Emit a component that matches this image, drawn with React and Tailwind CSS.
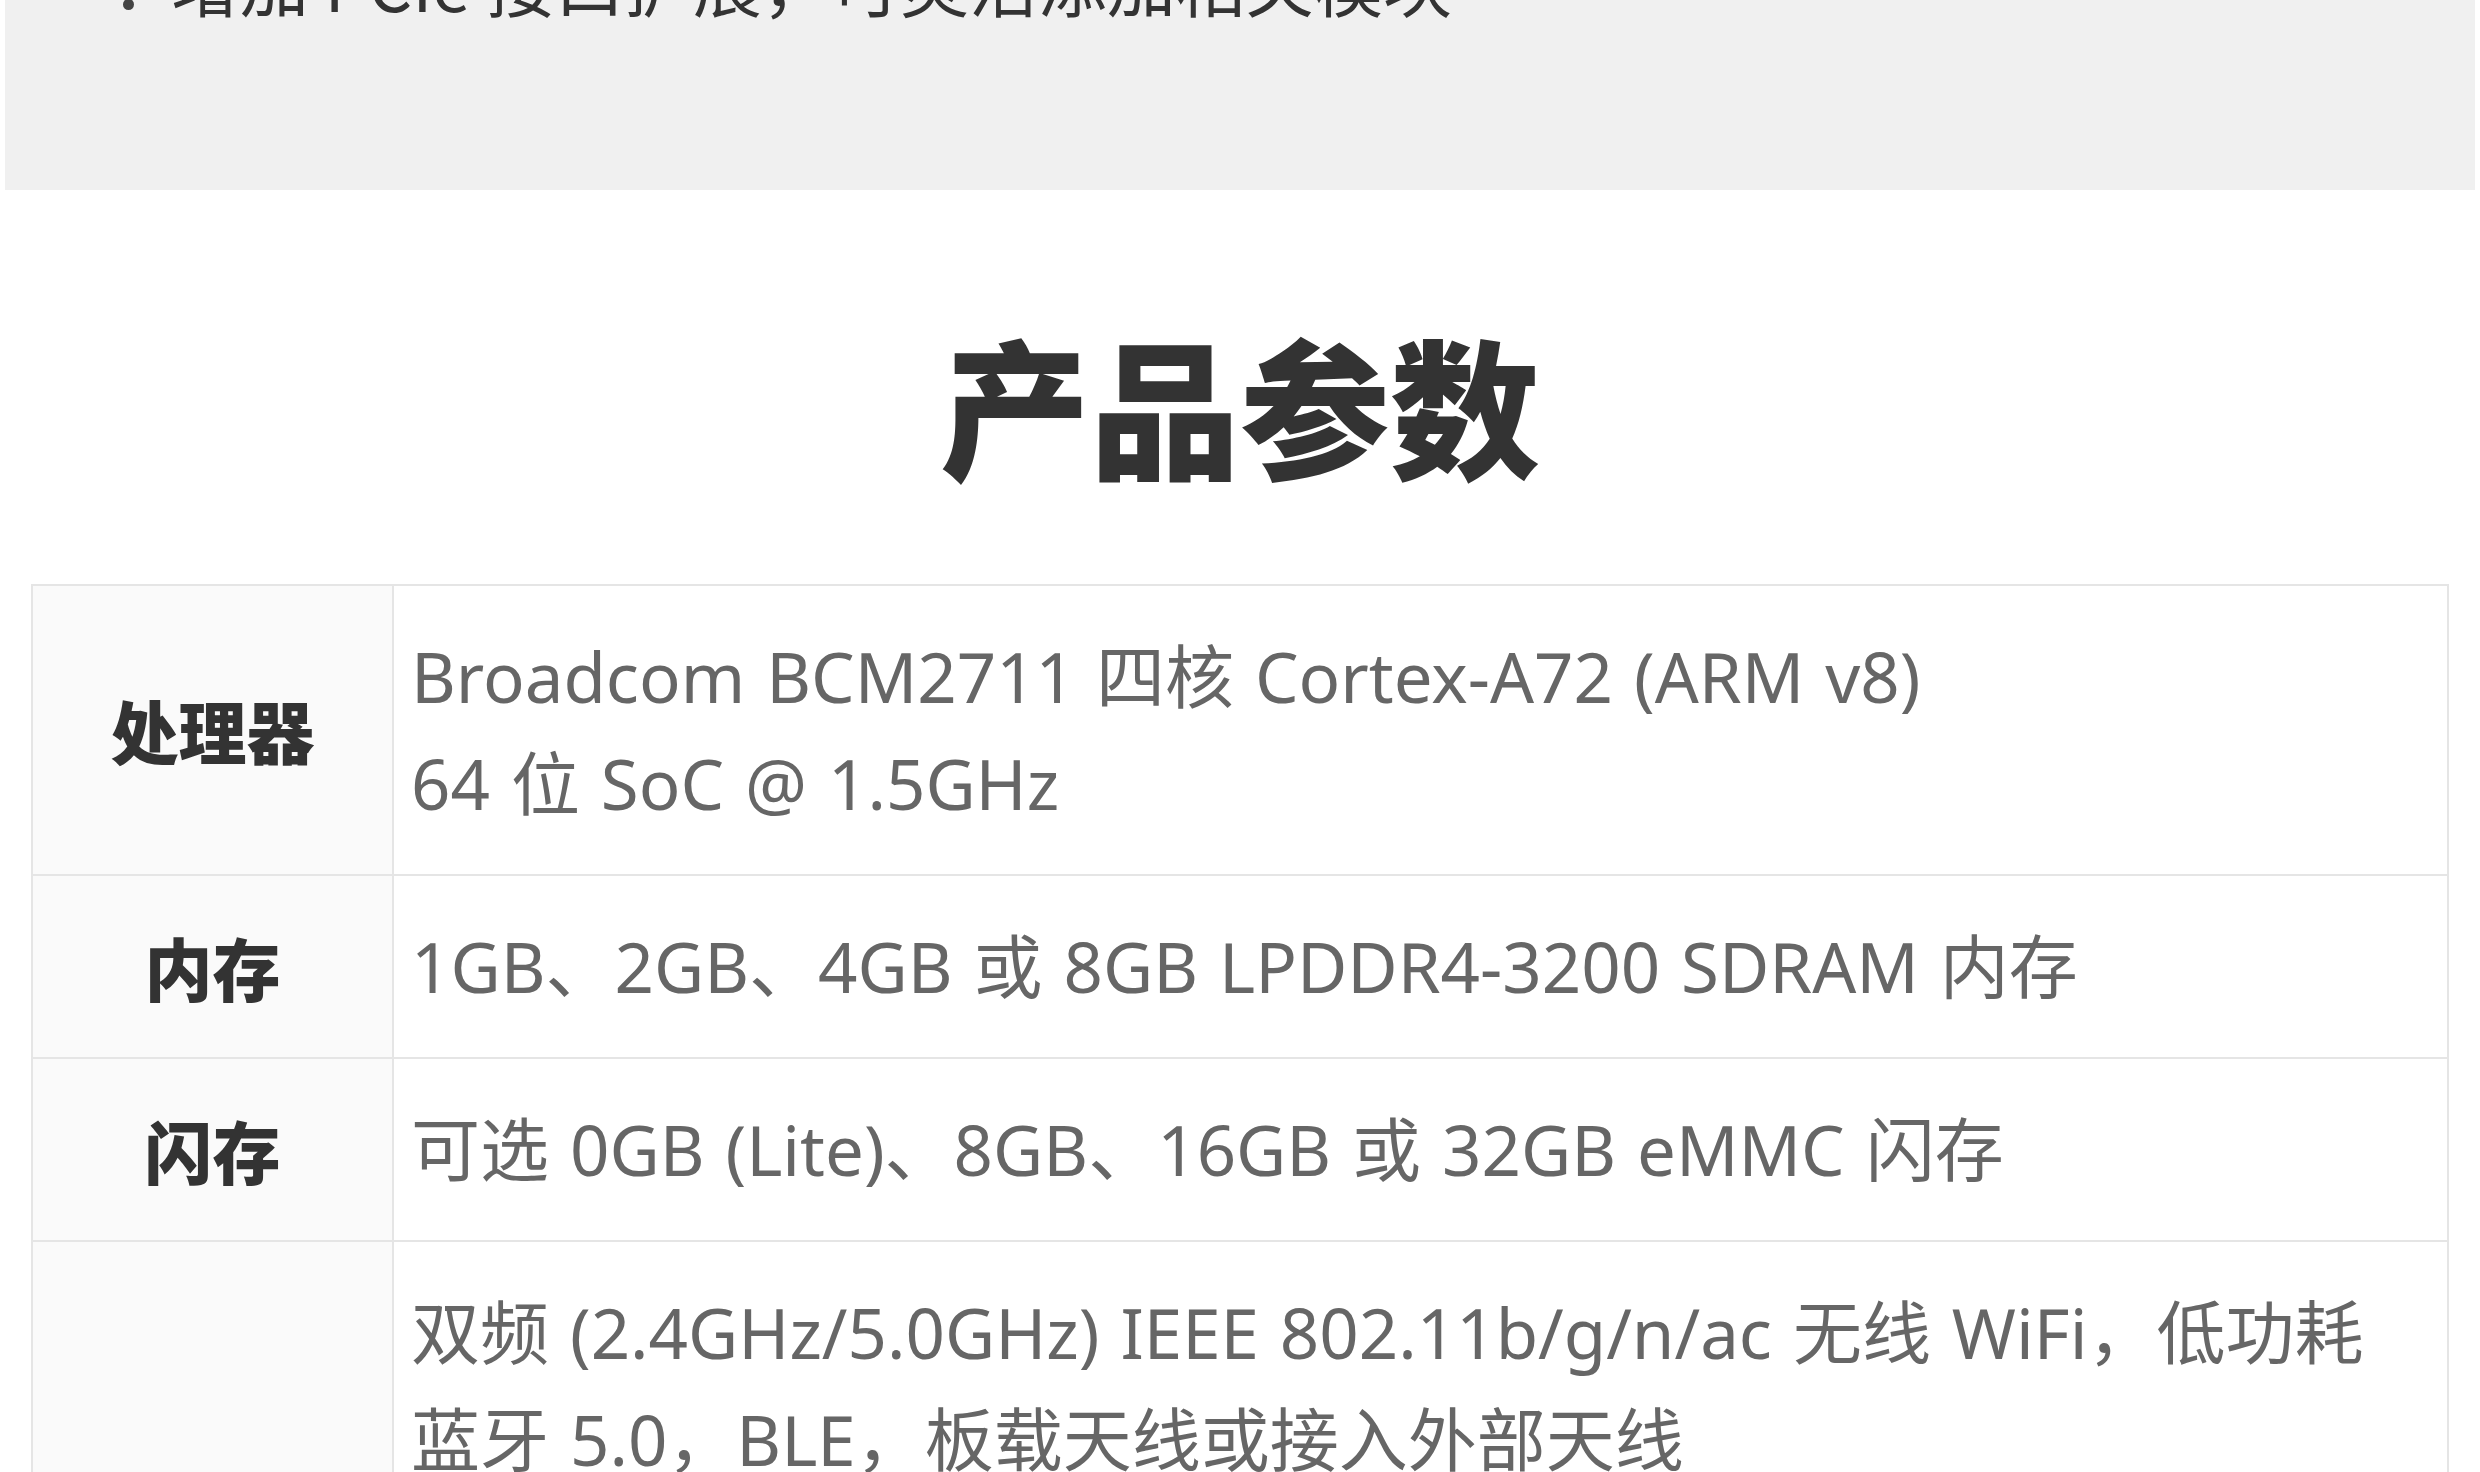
import React from "react";

const FONT = { fontFamily: '"Noto Sans", "Noto Sans CJK SC", sans-serif' };
const CJK = { fontFamily: '"Noto Sans CJK SC", sans-serif' };

function Row({ label, lines, first }) {
  return (
    <div className={`flex ${first ? "" : "border-t-2 border-[#e5e5e5]"}`}>
      <div
        className="w-[361px] shrink-0 bg-[#fafafa] border-r-2 border-[#e5e5e5] flex items-center justify-center text-[68px] font-black text-[#333333]"
        style={CJK}
      >
        {label}
      </div>
      <div
        className="flex-1 px-[17px] py-[37px] text-[69px] leading-[107px] [word-spacing:3px] text-[#666666]"
        style={FONT}
      >
        {lines.map((l, i) => (
          <div key={i}>{l}</div>
        ))}
      </div>
    </div>
  );
}

export default function App() {
  const rows = [
    {
      label: "处理器",
      lines: [
        "Broadcom BCM2711 四核 Cortex-A72 (ARM v8)",
        "64 位 SoC @ 1.5GHz",
      ],
    },
    {
      label: "内存",
      lines: ["1GB、2GB、4GB 或 8GB LPDDR4-3200 SDRAM 内存"],
    },
    {
      label: "闪存",
      lines: ["可选 0GB (Lite)、8GB、16GB 或 32GB eMMC 闪存"],
    },
    {
      label: "无线",
      lines: [
        "双频 (2.4GHz/5.0GHz) IEEE 802.11b/g/n/ac 无线 WiFi，低功耗",
        "蓝牙 5.0，BLE，板载天线或接入外部天线",
        "可选带无线或不带无线版本",
        "通过 CE、FCC 等认证",
        "支持 2×2 MIMO",
      ],
    },
  ];

  return (
    <div className="w-full bg-white min-h-screen">
      <div className="mx-[5px] -mt-[71px] bg-[#f0f0f0] pb-[154px]">
        <div
          className="flex items-end pl-[118px] text-[69px] leading-[107px] text-[#333333]"
          style={CJK}
        >
          <span className="w-[11px] h-[11px] rounded-full bg-[#444444] mr-[37px] mb-[26px]" />
          <span>增加 PCIe 接口扩展，可灵活添加相关模块</span>
        </div>
      </div>

      <h2
        className="mt-[138px] text-center text-[150px] leading-[150px] font-black text-[#333333]"
        style={CJK}
      >
        产品参数
      </h2>

      <div className="mx-[31px] mt-[106px] border-2 border-[#e5e5e5]">
        {rows.map((r, i) => (
          <Row key={i} label={r.label} lines={r.lines} first={i === 0} />
        ))}
      </div>
      <div className="h-[200px]" />
    </div>
  );
}
